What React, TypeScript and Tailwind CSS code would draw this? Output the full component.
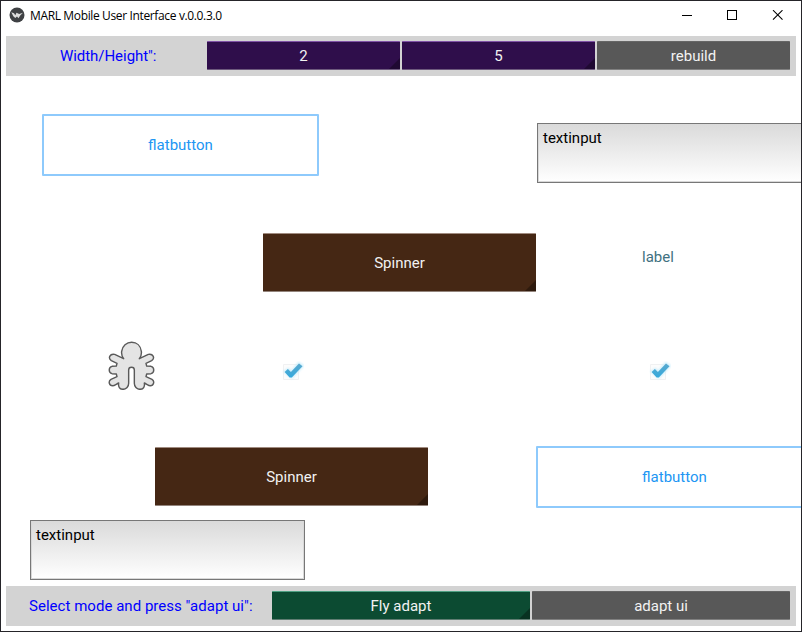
import React from "react";

type BoxProps = { className?: string; children?: React.ReactNode };

function Corner() {
  return (
    <svg className="absolute right-0 bottom-0 size-[11px]" viewBox="0 0 11 11">
      <path d="M11 0V11H0Z" fill="#000" fillOpacity=".32" />
    </svg>
  );
}

function Button({ className = "", children }: BoxProps) {
  return (
    <div className={`relative flex shrink-0 items-center justify-center rounded-[1px] border-y text-[#f2f2f2] ${className}`}>
      {children}
    </div>
  );
}

function Spinner({ className = "", children }: BoxProps) {
  return (
    <Button className={className}>
      {children}
      <Corner />
    </Button>
  );
}

function FlatButton({ className = "" }: BoxProps) {
  return (
    <div className={`flex h-[62px] w-[277px] shrink-0 items-center justify-center rounded-[1px] border-2 border-[#8ecafc] text-[#2196f3] ${className}`}>
      flatbutton
    </div>
  );
}

function TextInput({ className = "" }: BoxProps) {
  return (
    <div className={`h-[60px] w-[275px] shrink-0 border border-[#777] bg-linear-to-b from-[#dadada] to-white pt-[5px] pl-[5px] leading-[18px] text-black shadow-[inset_0_-1px_0_#d8d8d8,inset_1px_0_0_#d8d8d8,inset_-1px_0_0_#d8d8d8] ${className}`}>
      textinput
    </div>
  );
}

function Check({ className = "" }: BoxProps) {
  return (
    <svg className={`h-[20px] w-[22px] shrink-0 ${className}`} viewBox="0 0 22 20">
      <defs>
        <linearGradient id="tick" x1="0" y1="0" x2="0" y2="1">
          <stop offset="0" stopColor="#5aa9ce" />
          <stop offset="1" stopColor="#36a9dc" />
        </linearGradient>
        <filter id="glow" x="-30%" y="-30%" width="160%" height="160%">
          <feGaussianBlur stdDeviation="1.3" />
        </filter>
      </defs>
      <path d="M1.500 3.500H16.500V18.500H1.500Z" fill="#fcfcfc" stroke="#f0f1f2" />
      <path d="M3.500 10.500 6.300 8.700 9.300 11.800 17 2.700 20 5 9.700 16Z" fill="#a7e2fa" stroke="#b9e9fc" strokeWidth="3" opacity=".75" filter="url(#glow)" />
      <path d="M2.600 11 5.900 8 8.900 10.900 17 2.400 20.500 5.300 9.800 16.500 7.600 16.500Z" fill="url(#tick)" />
    </svg>
  );
}

function Figure() {
  return (
    <svg className="mt-[31px] ml-[106px] size-[49px] shrink-0" viewBox="51 33 147 147">
      <path
        d="M101 86C95 79 94 72 95 64C97 47 110 37 125 37C140 37 152 47 154 64C155 72 154 79 148 86L175 73C189 70 196 84 185 92L168 100L170 108L183 109C194 112 194 128 183 131L170 132L168 140L186 148C195 154 191 167 181 167C176 167 170 162 163 159C165 170 160 178 150 178C140 178 133 170 133 160V120C133 109 116 109 116 120V160C116 170 109 178 99 178C89 178 84 170 86 159C79 162 73 167 68 167C57 167 54 154 63 148L81 140L79 132L66 131C55 128 55 112 66 109L79 108L81 100L64 92C53 84 60 70 74 73Z"
        fill="#e4e4e4"
        stroke="#5a5a5a"
        strokeWidth="4.300"
        strokeLinejoin="round"
      />
    </svg>
  );
}

function TitleBar() {
  return (
    <header className="flex h-[35px] shrink-0 items-start">
      <svg className="mt-[6px] ml-2 size-4" viewBox="0 0 16 16">
        <circle cx="8" cy="8" r="7.500" fill="#3f4144" />
        <path d="M2.300 5.300 5 6.200 6.300 8.200 7.500 5.800 10.200 7 13.900 5.800 11.200 8.400 9.500 11.200 8 9.500 6.300 11 4.300 9.300Z" fill="#ddd" />
      </svg>
      <h1 className="mt-[6px] ml-[5px] font-['Open_Sans','Noto_Sans',sans-serif] text-[12px] leading-[17px] font-normal tracking-[-0.36px] whitespace-nowrap text-black">
        MARL Mobile User Interface v.0.0.3.0
      </h1>
      <svg className="mt-[9px] mr-[16px] ml-auto h-[11px] w-[103px]" viewBox="0 0 103 11" fill="none" stroke="#000">
        <path d="M0 5.500H10M45.500 .5H54.500V9.500H45.500Z" shapeRendering="crispEdges" />
        <path d="M91 .2 100.500 9.700M100.500 .2 91 9.700" strokeWidth="1.100" />
      </svg>
    </header>
  );
}

export default function App() {
  return (
    <div className="flex h-[632px] w-[802px] flex-col overflow-hidden border border-[#252429] bg-white font-[Roboto,sans-serif] text-[15px] leading-[18px]">
      <TitleBar />
      <div className="mx-[5px] flex h-10 shrink-0 bg-[#d3d3d3] pt-[5px]">
        <div className="flex h-[30px] w-[201px] items-center pl-[54px] tracking-[-0.05px] text-[#0000ff]">Width/Height":</div>
        <Spinner className="h-[29px] w-[193px] border-t-[#8053a6] border-b-[#6d597d] bg-[#2f0e4b] pt-px">2</Spinner>
        <Spinner className="ml-[2px] h-[29px] w-[193px] border-t-[#8053a6] border-b-[#6d597d] bg-[#2f0e4b] pt-px">5</Spinner>
        <Button className="ml-[2px] h-[29px] w-[193px] border-t-[#666] border-b-[#808080] bg-[#585858] pt-px">rebuild</Button>
      </div>
      <main className="h-[510px] shrink-0">
        <div className="flex h-[119px] items-start">
          <FlatButton className="mt-[38px] ml-[41px]" />
          <TextInput className="mt-[47px] ml-[218px]" />
        </div>
        <div className="flex h-[115px] items-start">
          <Spinner className="mt-[38px] ml-[262px] h-[59px] w-[273px] border-t-[#a08b80] border-b-[#93847c] bg-[#452714]">Spinner</Spinner>
          <span className="mt-[53px] ml-[106px] text-[#3f7181]">label</span>
        </div>
        <div className="flex h-[110px] items-start">
          <Figure />
          <Check className="mt-[51px] ml-[126px]" />
          <Check className="mt-[51px] ml-[345px]" />
        </div>
        <div className="flex h-[100px] items-start">
          <Spinner className="mt-[27px] ml-[154px] h-[59px] w-[273px] border-t-[#a08b80] border-b-[#93847c] bg-[#452714]">Spinner</Spinner>
          <FlatButton className="mt-[26px] ml-[108px]" />
        </div>
        <TextInput className="ml-[29px]" />
      </main>
      <div className="mx-[5px] flex h-10 shrink-0 bg-[#d3d3d3] pt-[5px]">
        <div className="flex h-[30px] w-[266px] items-center pl-[23px] tracking-[0.03px] whitespace-nowrap text-[#0000ff]">Select mode and press "adapt ui":</div>
        <Spinner className="h-[29px] w-[258px] border-t-[#50a084] border-b-[#607d72] bg-[#0c4b32] pt-px">Fly adapt</Spinner>
        <Button className="ml-[2px] h-[29px] w-[258px] border-t-[#666] border-b-[#808080] bg-[#585858] pt-px">adapt ui</Button>
      </div>
    </div>
  );
}
